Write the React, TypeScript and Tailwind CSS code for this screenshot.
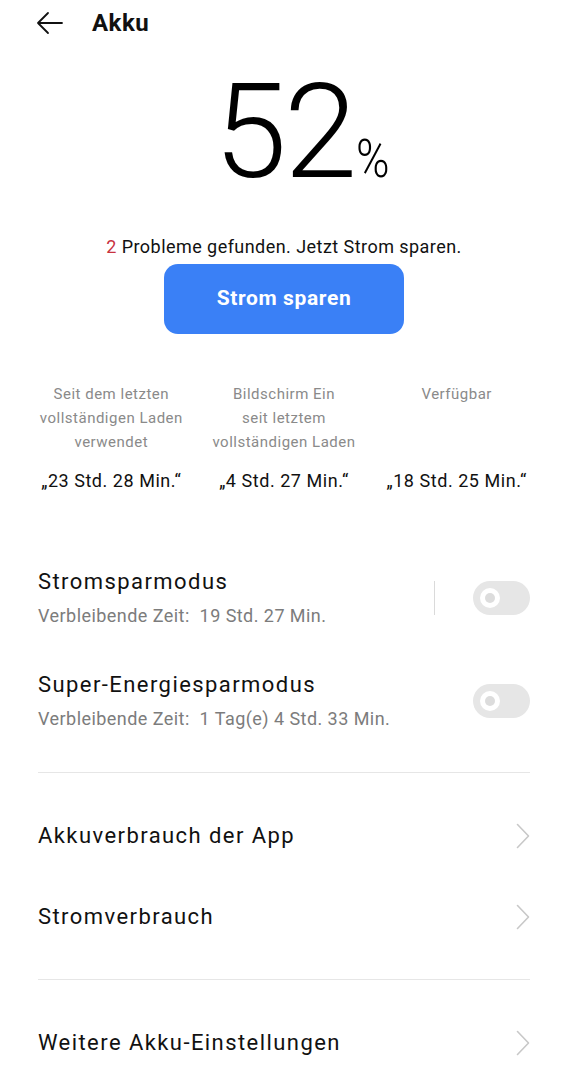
import React from "react";

function Toggle() {
  return (
    <div className="w-[57px] h-[34px] rounded-full bg-[#e6e6e6] flex items-center pl-[7px]">
      <div className="w-[20px] h-[20px] rounded-full bg-white flex items-center justify-center">
        <div className="w-[10px] h-[10px] rounded-full bg-[#dcdcdc]" />
      </div>
    </div>
  );
}

function Chevron() {
  return (
    <svg width="14" height="26" viewBox="0 0 14 26" fill="none">
      <path d="M1.5 1.5 L12.5 13 L1.5 24.5" stroke="#c8c8c8" strokeWidth="1.6" strokeLinecap="round" strokeLinejoin="round" />
    </svg>
  );
}

function NavRow({ label }: { label: string }) {
  return (
    <div className="h-[81px] flex items-center justify-between">
      <span className="text-[22px] leading-[30px] tracking-[0.065em] text-[#111]">{label}</span>
      <Chevron />
    </div>
  );
}

export default function App() {
  return (
    <div
      className="w-[568px] h-[1080px] bg-white overflow-hidden"
      style={{ fontFamily: "Roboto, 'Noto Sans', sans-serif" }}
    >
      {/* Header */}
      <div className="h-[46px] flex items-center pl-[36px]">
        <svg width="28" height="24" viewBox="0 0 28 24" fill="none">
          <path d="M2 12 H26 M12 2 L2 12 L12 22" stroke="#111" strokeWidth="1.8" strokeLinecap="round" strokeLinejoin="round" />
        </svg>
        <span className="ml-[28px] text-[24px] font-bold tracking-[0.02em] text-[#111] leading-none">Akku</span>
      </div>

      {/* Big percentage */}
      <div className="mt-[20px] flex justify-center items-baseline">
        <span className="w-[42px]" />
        <span className="text-[132px] leading-[132px] font-light text-black tracking-[-3px]">52</span>
        <span className="w-[40px] ml-[2px] text-[54px] leading-none font-light text-black">
          <span className="inline-block scale-x-[0.84] origin-left">%</span>
        </span>
      </div>

      {/* Problems */}
      <div className="mt-[37px] text-center text-[18px] leading-[24px] tracking-[0.025em] text-[#111]">
        <span className="text-[#c8323f]">2</span> Probleme gefunden. Jetzt Strom sparen.
      </div>

      <div className="mt-[5px] flex justify-center">
        <button className="w-[240px] h-[70px] rounded-[14px] bg-[#3a80f6] text-white text-[21px] tracking-[0.03em] font-bold">
          Strom sparen
        </button>
      </div>

      {/* Stats */}
      <div className="mt-[48px] px-[25px] grid grid-cols-3">
        {[
          { label: ["Seit dem letzten", "vollständigen Laden", "verwendet"], value: "„23 Std. 28 Min.“" },
          { label: ["Bildschirm Ein", "seit letztem", "vollständigen Laden"], value: "„4 Std. 27 Min.“" },
          { label: ["Verfügbar"], value: "„18 Std. 25 Min.“" },
        ].map((s, i) => (
          <div key={i} className="flex flex-col items-center text-center">
            <div className="h-[72px] text-[15px] leading-[24px] tracking-[0.5px] text-[#8a8a8a] whitespace-nowrap">
              {s.label.map((l, j) => (
                <div key={j}>{l}</div>
              ))}
            </div>
            <div className="mt-[15px] text-[18px] leading-[24px] tracking-[0.03em] text-[#111] whitespace-nowrap">{s.value}</div>
          </div>
        ))}
      </div>

      {/* Toggles */}
      <div className="px-[38px]">
        <div className="mt-[74px] flex items-center">
          <div className="flex-1">
            <div className="text-[22px] leading-[30px] tracking-[0.065em] text-[#111]">Stromsparmodus</div>
            <div className="mt-[7px] text-[18px] leading-[24px] tracking-[0.025em] text-[#7c7c7c] whitespace-pre">Verbleibende Zeit:  19 Std. 27 Min.</div>
          </div>
          <div className="w-px h-[34px] bg-[#dadada] mr-[38px]" />
          <Toggle />
        </div>

        <div className="mt-[42px] flex items-center">
          <div className="flex-1">
            <div className="text-[22px] leading-[30px] tracking-[0.065em] text-[#111]">Super-Energiesparmodus</div>
            <div className="mt-[7px] text-[18px] leading-[24px] tracking-[0.025em] text-[#7c7c7c] whitespace-pre">Verbleibende Zeit:  1 Tag(e) 4 Std. 33 Min.</div>
          </div>
          <Toggle />
        </div>

        <div className="mt-[41px] h-px bg-[#e6e6e6]" />

        <div className="py-[22px]">
          <NavRow label="Akkuverbrauch der App" />
          <NavRow label="Stromverbrauch" />
        </div>

        <div className="h-px bg-[#e6e6e6]" />

        <div className="pt-[22px]">
          <NavRow label="Weitere Akku-Einstellungen" />
        </div>
      </div>
    </div>
  );
}
